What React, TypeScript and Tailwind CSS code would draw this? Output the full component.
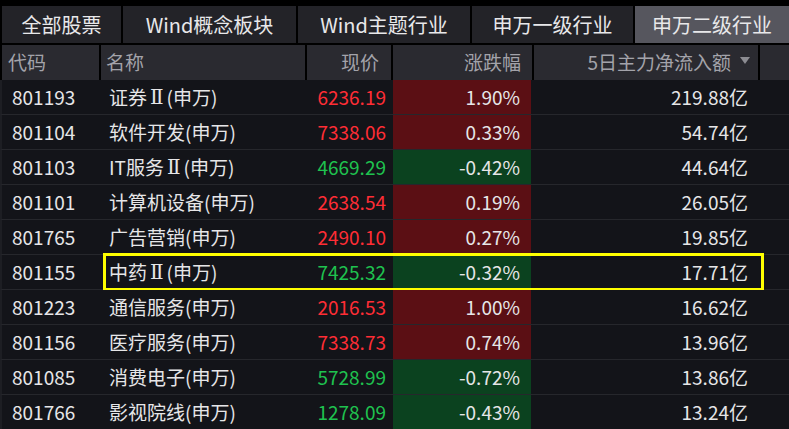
import React from "react";

type Row = { code: string; name: string; price: string; chg: string; up: boolean; flow: string };

const rows: Row[] = [
  { code: "801193", name: "证券Ⅱ(申万)", price: "6236.19", chg: "1.90%", up: true, flow: "219.88亿" },
  { code: "801104", name: "软件开发(申万)", price: "7338.06", chg: "0.33%", up: true, flow: "54.74亿" },
  { code: "801103", name: "IT服务Ⅱ(申万)", price: "4669.29", chg: "-0.42%", up: false, flow: "44.64亿" },
  { code: "801101", name: "计算机设备(申万)", price: "2638.54", chg: "0.19%", up: true, flow: "26.05亿" },
  { code: "801765", name: "广告营销(申万)", price: "2490.10", chg: "0.27%", up: true, flow: "19.85亿" },
  { code: "801155", name: "中药Ⅱ(申万)", price: "7425.32", chg: "-0.32%", up: false, flow: "17.71亿" },
  { code: "801223", name: "通信服务(申万)", price: "2016.53", chg: "1.00%", up: true, flow: "16.62亿" },
  { code: "801156", name: "医疗服务(申万)", price: "7338.73", chg: "0.74%", up: true, flow: "13.96亿" },
  { code: "801085", name: "消费电子(申万)", price: "5728.99", chg: "-0.72%", up: false, flow: "13.86亿" },
  { code: "801766", name: "影视院线(申万)", price: "1278.09", chg: "-0.43%", up: false, flow: "13.24亿" },
];

const tabs = [
  { label: "全部股票", w: "w-[119px]" },
  { label: "Wind概念板块", w: "w-[173px]" },
  { label: "Wind主题行业", w: "w-[172px]" },
  { label: "申万一级行业", w: "w-[161px]" },
  { label: "申万二级行业", w: "flex-1", active: true },
];

function Name({ text }: { text: string }) {
  const parts = text.split("Ⅱ");
  if (parts.length === 1) return <>{text}</>;
  return (
    <>
      {parts[0]}
      <span className="font-['DejaVu_Serif',serif] text-[20px] px-[3px]">Ⅱ</span>
      {parts[1]}
    </>
  );
}

export default function App() {
  return (
    <div className="w-[789px] h-[429px] overflow-hidden bg-black font-['Noto_Sans_CJK_SC','Noto_Sans',sans-serif] select-none">
      {/* Tabs */}
      <div className="flex gap-[2px] pl-[2px] pt-[6px] h-[43px]">
        {tabs.map((t) => (
          <div
            key={t.label}
            className={`${t.w} h-[37px] flex items-center justify-center text-[20px] text-[#e8e8ea] ${
              t.active ? "bg-[#56565e]" : "bg-[#232328]"
            }`}
          >
            {t.label}
          </div>
        ))}
      </div>

      {/* Header */}
      <div className="mt-[2px] flex gap-[2px] pl-[2px] h-[35px] text-[19px] text-[#a3a3aa]">
        <div className="w-[97px] bg-[#2a2a30] flex items-center pl-[6px]">代码</div>
        <div className="w-[204px] bg-[#2a2a30] flex items-center pl-[5px]">名称</div>
        <div className="w-[84px] bg-[#2a2a30] flex items-center justify-end pr-[12px]">现价</div>
        <div className="w-[139px] bg-[#2a2a30] flex items-center justify-end pr-[11px]">涨跌幅</div>
        <div className="w-[224px] bg-[#2a2a30] flex items-center justify-end pr-[8px] gap-[9px]">
          <span>5日主力净流入额</span>
          <svg width="10" height="8" viewBox="0 0 10 8" className="mb-[4px]">
            <polygon points="0,0 10,0 5,7" fill="#8c8c92" />
          </svg>
        </div>
        <div className="flex-1 bg-[#2a2a30]" />
      </div>

      {/* Rows */}
      <div className="flex flex-col">
        {rows.map((r, i) => (
          <div
            key={r.code}
            className="relative flex h-[35px] bg-[#131419] border-b border-[#26272c] border-l-[2px] border-l-[#1d1e23] text-[19px]"
          >
            <div className="w-[99px] flex items-center pl-[10px] text-[#e6e6e8]">{r.code}</div>
            <div className="w-[204px] flex items-center pl-[8px] text-[#e6e6e8] whitespace-nowrap">
              <Name text={r.name} />
            </div>
            <div
              className={`w-[88px] flex items-center justify-end pr-[7px] ${
                r.up ? "text-[#ff2d35]" : "text-[#1fc24f]"
              }`}
            >
              {r.price}
            </div>
            <div
              className={`w-[138px] flex items-center justify-end pr-[11px] text-[#e6e6e8] ${
                r.up ? "bg-[#5b0f14]" : "bg-[#0b421f]"
              }`}
            >
              {r.chg}
            </div>
            <div className="w-[227px] flex items-center justify-end pr-[10px] text-[#e6e6e8]">{r.flow}</div>
            <div className="flex-1" />
            {i === 5 && (
              <div className="absolute left-[101px] top-[-2px] w-[661px] h-[38px] border-[3px] border-[#ffff00] pointer-events-none" />
            )}
          </div>
        ))}
      </div>
    </div>
  );
}
